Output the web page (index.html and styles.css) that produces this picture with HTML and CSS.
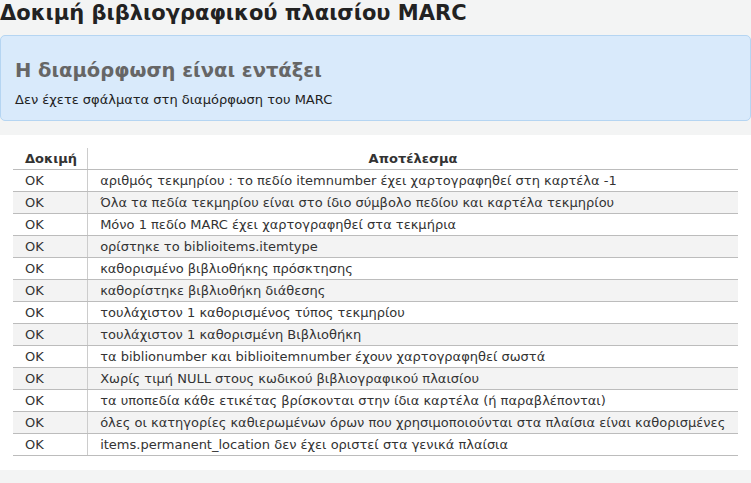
FILE: index.html
```html
<!DOCTYPE html>
<html lang="el">
<head>
<meta charset="utf-8">
<title>Δοκιμή βιβλιογραφικού πλαισίου MARC</title>
<link rel="stylesheet" href="styles.css">
</head>
<body>
<h1 class="page-title">Δοκιμή βιβλιογραφικού πλαισίου MARC</h1>
<div class="alert">
  <h3 class="alert-title">Η διαμόρφωση είναι εντάξει</h3>
  <p class="alert-text">Δεν έχετε σφάλματα στη διαμόρφωση του MARC</p>
</div>
<div class="page-section">
  <table class="results">
    <thead>
      <tr><th class="col-test">Δοκιμή</th><th class="col-result">Αποτέλεσμα</th></tr>
    </thead>
    <tbody>
      <tr><td>OK</td><td>αριθμός τεκμηρίου : το πεδίο itemnumber έχει χαρτογραφηθεί στη καρτέλα -1</td></tr>
      <tr><td>OK</td><td>Όλα τα πεδία τεκμηρίου είναι στο ίδιο σύμβολο πεδίου και καρτέλα τεκμηρίου</td></tr>
      <tr><td>OK</td><td>Μόνο 1 πεδίο MARC έχει χαρτογραφηθεί στα τεκμήρια</td></tr>
      <tr><td>OK</td><td>ορίστηκε το biblioitems.itemtype</td></tr>
      <tr><td>OK</td><td>καθορισμένο βιβλιοθήκης πρόσκτησης</td></tr>
      <tr><td>OK</td><td>καθορίστηκε βιβλιοθήκη διάθεσης</td></tr>
      <tr><td>OK</td><td>τουλάχιστον 1 καθορισμένος τύπος τεκμηρίου</td></tr>
      <tr><td>OK</td><td>τουλάχιστον 1 καθορισμένη Βιβλιοθήκη</td></tr>
      <tr><td>OK</td><td>τα biblionumber και biblioitemnumber έχουν χαρτογραφηθεί σωστά</td></tr>
      <tr><td>OK</td><td>Χωρίς τιμή NULL στους κωδικού βιβλιογραφικού πλαισίου</td></tr>
      <tr><td>OK</td><td>τα υποπεδία κάθε ετικέτας βρίσκονται στην ίδια καρτέλα (ή παραβλέπονται)</td></tr>
      <tr><td>OK</td><td>όλες οι κατηγορίες καθιερωμένων όρων που χρησιμοποιούνται στα πλαίσια είναι καθορισμένες</td></tr>
      <tr><td>OK</td><td>items.permanent_location δεν έχει οριστεί στα γενικά πλαίσια</td></tr>
    </tbody>
  </table>
</div>
</body>
</html>
```

FILE: styles.css
```css
html, body {
  margin: 0;
  padding: 0;
}
body {
  background: #f3f4f4;
  font-family: "DejaVu Sans", sans-serif;
  color: #222;
}
.page-title {
  margin: 0;
  padding: 1px 0 0 0;
  height: 35px;
  box-sizing: border-box;
  font-size: 21px;
  line-height: 25px;
  font-weight: bold;
  color: #222;
}
.alert {
  box-sizing: border-box;
  width: 751px;
  height: 86px;
  margin: 0;
  padding: 22px 14px 0 14px;
  background: #d9eafb;
  border: 1px solid #b5d5f2;
  border-radius: 5px;
}
.alert-title {
  margin: 0;
  font-size: 19.5px;
  line-height: 26px;
  font-weight: bold;
  color: #666;
}
.alert-text {
  margin: 8px 0 0 0;
  font-size: 13px;
  line-height: 16px;
  color: #222;
}
.page-section {
  margin-top: 14px;
  background: #fff;
  padding: 13px 13px 14px 13px;
}
.results {
  width: 100%;
  border-collapse: collapse;
  font-size: 13px;
  color: #333;
}
.results th {
  font-weight: bold;
  text-align: center;
  padding: 3px 12px;
  line-height: 15px;
  border-bottom: 1px solid #bcbcbc;
  white-space: nowrap;
}
.results th.col-test {
  text-align: left;
  width: 1px;
  padding: 3px 10px 3px 12px;
  border-right: 1px solid #ccc;
}
.results td {
  padding: 3px 12px;
  line-height: 15px;
  text-align: left;
  border-bottom: 1px solid #bcbcbc;
  white-space: nowrap;
}
.results td:first-child {
  padding: 3px 10px 3px 12px;
  border-right: 1px solid #ccc;
}
.results tbody tr:nth-child(even) td {
  background: #f3f3f3;
}
```
